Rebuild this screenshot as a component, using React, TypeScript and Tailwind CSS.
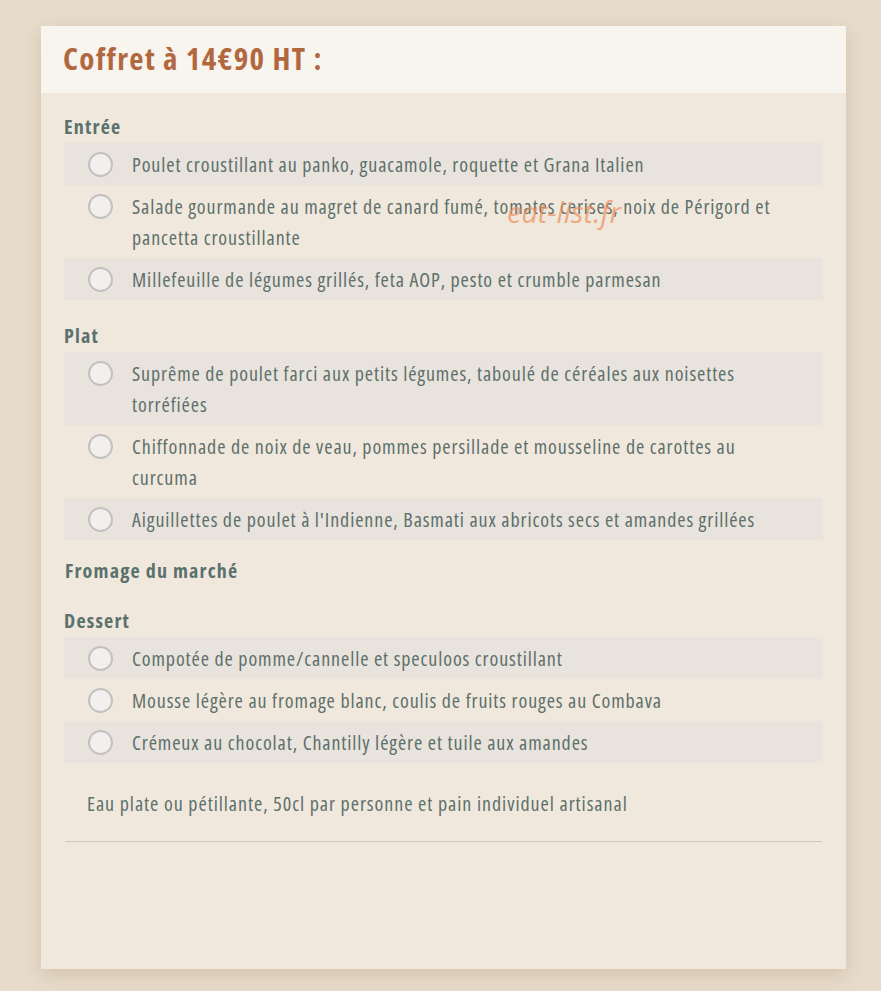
import React from "react";

type Course = {
  title: string;
  dishes: string[];
};

const courses: Course[] = [
  {
    title: "Entrée",
    dishes: [
      "Poulet croustillant au panko, guacamole, roquette et Grana Italien",
      "Salade gourmande au magret de canard fumé, tomates cerises, noix de Périgord et pancetta croustillante",
      "Millefeuille de légumes grillés, feta AOP, pesto et crumble parmesan",
    ],
  },
  {
    title: "Plat",
    dishes: [
      "Suprême de poulet farci aux petits légumes, taboulé de céréales aux noisettes torréfiées",
      "Chiffonnade de noix de veau, pommes persillade et mousseline de carottes au curcuma",
      "Aiguillettes de poulet à l'Indienne, Basmati aux abricots secs et amandes grillées",
    ],
  },
];

const desserts: string[] = [
  "Compotée de pomme/cannelle et speculoos croustillant",
  "Mousse légère au fromage blanc, coulis de fruits rouges au Combava",
  "Crémeux au chocolat, Chantilly légère et tuile aux amandes",
];

const DishRow = ({ label, index }: { label: string; index: number }) => (
  <label
    className={`flex items-start gap-[19px] py-[5.5px] pl-[24px] pr-[27px] cursor-pointer ${
      index % 2 === 0 ? "bg-[#e8e3dc]" : ""
    }`}
  >
    <span className="mt-[3px] h-[25px] w-[25px] shrink-0 rounded-full border-[2.5px] border-[#c3c1bf] bg-[#f1f0ef]" />
    <span className="text-[20px] leading-[31px] tracking-[0.9px] text-[#5e706c]">{label}</span>
  </label>
);

const Heading = ({ children, className = "" }: { children: React.ReactNode; className?: string }) => (
  <h3 className={`text-[20px] leading-[30px] tracking-[1.2px] font-bold text-[#5a716d] ${className}`}>
    {children}
  </h3>
);

const CourseBlock = ({ course }: { course: Course }) => (
  <div>
    <Heading className="mb-[1px]">{course.title}</Heading>
    <div>
      {course.dishes.map((dish, i) => (
        <DishRow key={dish} label={dish} index={i} />
      ))}
    </div>
  </div>
);

export default function App() {
  return (
    <div
      className="min-h-[991px] bg-[#e7dccb] pt-[26px] pl-[41px] font-stretch-condensed"
      style={{ fontFamily: '"Open Sans", "Liberation Sans Narrow", sans-serif' }}
    >
      <div className="relative w-[805px] h-[943px] bg-[#f0e8dc] shadow-[0_6px_18px_rgba(150,120,80,0.25)]">
        {/* header band */}
        <div className="h-[67px] bg-[#f8f4ee] pl-[22px] pt-[12px]">
          <h2 className="text-[31px] leading-[40px] tracking-[1.4px] font-bold text-[#b1683f]">
            Coffret à 14€90 HT :
          </h2>
        </div>

        <div className="px-[23px] pt-[19px]">
          <div className="flex flex-col gap-[21px]">
            {courses.map((c) => (
              <CourseBlock key={c.title} course={c} />
            ))}
          </div>

          <Heading className="mt-[16px] pl-[1px]">Fromage du marché</Heading>

          <div className="mt-[20px]">
            <Heading className="mb-[1px]">Dessert</Heading>
            {desserts.map((d, i) => (
              <DishRow key={d} label={d} index={i} />
            ))}
          </div>

          <p className="mt-[26px] pl-[23px] text-[20px] leading-[30px] tracking-[0.95px] text-[#5e706c]">
            Eau plate ou pétillante, 50cl par personne et pain individuel artisanal
          </p>

          <hr className="mt-[22px] ml-[1px] mr-[1px] border-t border-[#cfc7bb]" />
        </div>

        {/* watermark */}
        <span className="pointer-events-none absolute left-[466px] top-[164px] text-[29px] italic font-stretch-normal text-[#ee8f5e] opacity-70">
          eat-list.fr
        </span>
      </div>
    </div>
  );
}
